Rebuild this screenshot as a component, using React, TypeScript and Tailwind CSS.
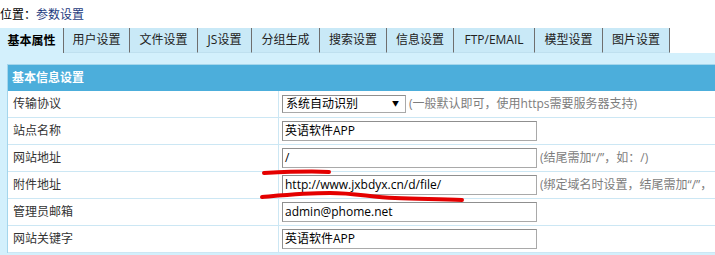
import React from 'react';

const tabs = [
  { name: '基本属性', w: 64 },
  { name: '用户设置', w: 66 },
  { name: '文件设置', w: 68 },
  { name: 'JS设置', w: 54 },
  { name: '分组生成', w: 68 },
  { name: '搜索设置', w: 67 },
  { name: '信息设置', w: 67 },
  { name: 'FTP/EMAIL', w: 81 },
  { name: '模型设置', w: 68 },
  { name: '图片设置', w: 67 },
];

const Field = ({ value }: { value: string }) => (
  <div className="shrink-0 w-[255px] h-[20px] border border-[#a9a9a9] border-t-[#8f8f8f] border-l-[#8f8f8f] bg-white px-[2px] leading-[18px] text-[12px] text-black">
    {value}
  </div>
);

const Row = ({ label, children }: { label: string; children: React.ReactNode }) => (
  <div className="flex h-[27px] border-b border-[#cce7f4]">
    <div className="shrink-0 w-[271px] border-r border-[#cce7f4] pl-[5px] flex items-center text-[12px] text-[#333]">
      {label}
    </div>
    <div className="flex-1 min-w-0 overflow-hidden flex items-center pl-[3px] gap-[3px] whitespace-nowrap">{children}</div>
  </div>
);

const Hint = ({ children }: { children: React.ReactNode }) => (
  <span className="shrink-0 text-[12px] text-[#7d7d7d]">{children}</span>
);

export default function App() {
  return (
    <div
      className="relative w-[715px] h-[255px] overflow-hidden bg-white"
      style={{ fontFamily: '"Open Sans", "Noto Sans CJK SC", sans-serif' }}
    >
      {/* 位置 */}
      <div className="h-[28px] flex items-center pt-[2px] text-[12px] text-black">
        位置：<span className="text-[#1d3b80]">参数设置</span>
      </div>

      {/* Tabs */}
      <div className="flex h-[25px]">
        {tabs.map((t, i) => (
          <div
            key={t.name}
            style={{ width: t.w }}
            className={
              'flex items-center justify-center text-[12px] border-r border-[#6e6e6e] ' +
              (i === 0 ? 'bg-[#d3f0fc] text-black font-bold' : 'bg-[#c9e9f7] text-[#222] border-b border-b-[#bfe0ef]')
            }
          >
            {t.name}
          </div>
        ))}
      </div>

      {/* Panel */}
      <div className="bg-[#d3f0fc] pl-[7px] pt-[11px] h-[202px]">
        <div className="bg-white border-l border-t border-[#a4d6ec]">
          <div className="h-[26px] bg-[#4caedb] flex items-center pl-[4px] text-[12px] font-bold text-white">
            基本信息设置
          </div>
          <Row label="传输协议">
            <div className="shrink-0 w-[124px] h-[18px] border border-[#a9a9a9] border-t-[#8f8f8f] border-l-[#8f8f8f] bg-white flex items-center justify-between pl-[3px] pr-[6px] text-[12px] text-black">
              <span>系统自动识别</span>
              <span className="text-[7px]">▼</span>
            </div>
            <Hint>(一般默认即可，使用https需要服务器支持)</Hint>
          </Row>
          <Row label="站点名称">
            <Field value="英语软件APP" />
          </Row>
          <Row label="网站地址">
            <Field value="/" />
            <Hint>(结尾需加“/”，如：/)</Hint>
          </Row>
          <Row label="附件地址">
            <Field value="http://www.jxbdyx.cn/d/file/" />
            <Hint>(绑定域名时设置，结尾需加“/”，</Hint>
          </Row>
          <Row label="管理员邮箱">
            <Field value="admin@phome.net" />
          </Row>
          <Row label="网站关键字">
            <Field value="英语软件APP" />
          </Row>
        </div>
      </div>

      {/* red marker strokes drawn over the screenshot */}
      <svg className="absolute left-0 top-0 pointer-events-none" width="715" height="255">
        <path d="M264 173 C285 172, 310 171, 329 172" stroke="#e40000" strokeWidth="4" fill="none" strokeLinecap="round" />
        <path d="M262 197 C285 195, 305 193, 330 193 C355 193, 370 197, 395 198 C420 199, 440 199, 462 200" stroke="#e40000" strokeWidth="4" fill="none" strokeLinecap="round" />
      </svg>
    </div>
  );
}
